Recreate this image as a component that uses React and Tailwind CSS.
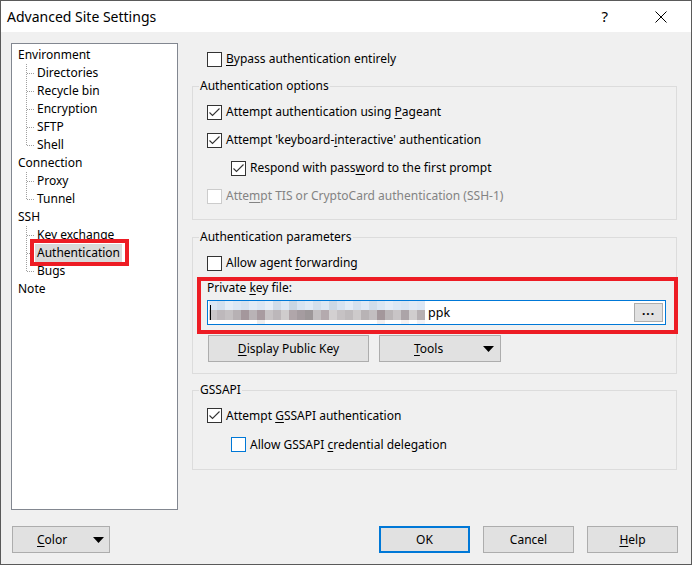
import React from "react";

const TREE = [
  { t: "Environment", kids: ["Directories", "Recycle bin", "Encryption", "SFTP", "Shell"] },
  { t: "Connection", kids: ["Proxy", "Tunnel"] },
  { t: "SSH", kids: ["Key exchange", "Authentication", "Bugs"] },
  { t: "Note", kids: [] },
];

// pixelated (blurred) file path
const TOP_ROW = [
  "bg-[#dbe7f4]", "bg-[#d3e0ee]", "bg-[#e4edf7]", "bg-[#dbe7f4]", "bg-[#d6e2ef]", "bg-[#e2ebf6]",
  "bg-[#dbe6f3]", "bg-[#e6eef7]", "bg-[#d0dce9]", "bg-[#dde8f4]", "bg-[#c9d6e3]", "bg-[#d8e4f1]",
  "bg-[#e0eaf5]", "bg-[#d3dfec]", "bg-[#dce7f3]", "bg-[#cbd8e5]", "bg-[#d7e3f0]", "bg-[#e3ecf6]",
  "bg-[#d5e1ee]", "bg-[#dfe9f5]", "bg-[#d1ddea]", "bg-[#dbe6f2]", "bg-[#e5edf7]", "bg-[#dde8f4]",
  "bg-[#d9e5f2]", "bg-[#e1eaf5]", "bg-[#dce7f4]",
];
const MID_ROW = [
  "bg-[#c9c6c8]", "bg-[#bdb8bb]", "bg-[#c4c0c2]", "bg-[#b7b1b4]", "bg-[#a4979c]", "bg-[#b9b3b6]",
  "bg-[#a89ba0]", "bg-[#c7c3c5]", "bg-[#bcb7ba]", "bg-[#cfcccd]", "bg-[#b0a6aa]", "bg-[#a59ca0]",
  "bg-[#9d9799]", "bg-[#c3bfc1]", "bg-[#b4aaae]", "bg-[#d3d0d1]", "bg-[#c6c2c4]", "bg-[#bfbbbd]",
  "bg-[#cdcacb]", "bg-[#b8b3b5]", "bg-[#c2bec0]", "bg-[#a3979b]", "bg-[#bab5b7]", "bg-[#c8c4c6]",
  "bg-[#aca4a8]", "bg-[#d0cdce]", "bg-[#b6b0b3]",
];
const LOW_ROW = [
  "bg-white", "bg-white", "bg-white", "bg-white", "bg-white", "bg-white", "bg-[#ededed]",
  "bg-white", "bg-white", "bg-white", "bg-white", "bg-white", "bg-white", "bg-white",
  "bg-white", "bg-white", "bg-white", "bg-white", "bg-white", "bg-white", "bg-white",
  "bg-[#f2efef]", "bg-white", "bg-white", "bg-[#f5f2f2]", "bg-white", "bg-[#f2f2f6]",
];

const Box = ({ checked, disabled, focus }) => (
  <span
    className={`flex h-[15px] w-[15px] shrink-0 items-center justify-center border bg-white ${
      disabled ? "border-[#cccccc]" : focus ? "border-[#0078d7]" : "border-[#333333]"
    }`}
  >
    {checked && (
      <svg width="13" height="13" viewBox="0 0 13 13">
        <path d="M1.5 6.5 L4.5 9.5 L11.5 2.5" fill="none" stroke="#333" strokeWidth="1.1" />
      </svg>
    )}
  </span>
);

const Check = ({ children, checked, disabled, focus, className = "pl-[14px]", h = "h-[28px]" }) => (
  <div className={`flex items-center gap-[4px] ${h} ${className}`}>
    <Box checked={checked} disabled={disabled} focus={focus} />
    <span className={disabled ? "text-[#838383]" : "text-black"}>{children}</span>
  </div>
);

const U = ({ children }) => <span className="underline underline-offset-[2px]">{children}</span>;

const Group = ({ title, className = "", children }) => (
  <fieldset className={`border border-[#dcdcdc] ${className}`}>
    <legend className="ml-[6px] px-[1px] leading-[16px]">{title}</legend>
    {children}
  </fieldset>
);

const Btn = ({ children, className = "", def, split }) => (
  <button
    className={`flex h-[27px] items-center bg-[#e1e1e1] ${split ? "justify-between" : "justify-center"} ${
      def ? "border-2 border-[#0078d7]" : "border border-[#adadad]"
    } ${className}`}
  >
    {children}
  </button>
);

const Tri = () => (
  <svg width="11" height="6" viewBox="0 0 11 6">
    <polygon points="0,0 11,0 5.5,6" fill="#000" />
  </svg>
);

const Connector = ({ last }) => (
  <svg width="9" height="18" viewBox="0 0 9 18" className="shrink-0">
    <line x1="0.5" y1="0" x2="0.5" y2={last ? 9.5 : 18} stroke="#a0a0a0" strokeDasharray="1 1" />
    <line x1="1" y1="9.5" x2="9" y2="9.5" stroke="#a0a0a0" strokeDasharray="1 1" />
  </svg>
);

export default function App() {
  return (
    <div className="flex h-[565px] w-[692px] flex-col border border-[#5a5a5a] bg-[#f0f0f0] font-['Noto_Sans',sans-serif] text-[12px] text-black">
      {/* title bar */}
      <div className="flex h-[31px] shrink-0 items-center bg-white pl-[6px]">
        <span className="text-[14px]">Advanced Site Settings</span>
        <span className="ml-auto text-[15px]">?</span>
        <svg width="12" height="12" viewBox="0 0 12 12" className="ml-[47px] mr-[24px]">
          <path d="M0.5 0.5 L11.5 11.5 M11.5 0.5 L0.5 11.5" stroke="#000" strokeWidth="1" />
        </svg>
      </div>

      <div className="flex pl-[10px] pt-[11px]">
        {/* tree */}
        <div className="h-[467px] w-[167px] shrink-0 border border-[#828790] bg-white pt-[2px]">
          {TREE.map((g) => (
            <div key={g.t}>
              <div className="flex h-[18px] items-center pl-[6px]">{g.t}</div>
              {g.kids.map((k, i) => (
                <div key={k} className="flex h-[18px] items-center pl-[14px]">
                  <Connector last={i === g.kids.length - 1} />
                  {k === "Authentication" ? (
                    <span className="relative flex h-[18px] items-center bg-[#d9d9d9] px-[2px]">
                      {k}
                      <span className="absolute -bottom-[4px] -left-[5px] -right-[7px] -top-[5px] border-4 border-[#ed1c24]" />
                    </span>
                  ) : (
                    <span className="px-[2px]">{k}</span>
                  )}
                </div>
              ))}
            </div>
          ))}
        </div>

        {/* right panel */}
        <div className="ml-[14px] w-[485px] pt-[2px]">
          <Check className="pl-[15px]">
            <U>B</U>ypass authentication entirely
          </Check>

          <Group title="Authentication options" className="mt-[5px] pb-[9px] pt-[4px]">
            <Check checked>
              Attempt authentication using <U>P</U>ageant
            </Check>
            <Check checked>
              Attempt 'keyboard-<U>i</U>nteractive' authentication
            </Check>
            <Check checked className="pl-[38px]">
              Respond with pass<U>w</U>ord to the first prompt
            </Check>
            <Check disabled>
              Atte<U>m</U>pt TIS or CryptoCard authentication (SSH-1)
            </Check>
          </Group>

          <Group title="Authentication parameters" className="mt-[9px] pb-[11px] pt-[4px]">
            <Check>
              Allow agent <U>f</U>orwarding
            </Check>
            <div className="relative ml-[14px] mr-[10px] mt-[3px]">
              <div className="leading-[16px]">
                Private <U>k</U>ey file:
              </div>
              <div className="mt-[4px] flex h-[25px] items-center border border-[#0078d7] bg-white pr-[2px]">
                <div className="relative ml-[1px] flex h-full flex-col">
                  <div className="flex h-[9px]">
                    {TOP_ROW.map((c, i) => (
                      <span key={i} className={`h-full w-[8px] ${c}`} />
                    ))}
                  </div>
                  <div className="flex h-[10px]">
                    {MID_ROW.map((c, i) => (
                      <span key={i} className={`h-full w-[8px] ${c}`} />
                    ))}
                  </div>
                  <div className="flex h-[4px]">
                    {LOW_ROW.map((c, i) => (
                      <span key={i} className={`h-full w-[8px] ${c}`} />
                    ))}
                  </div>
                  <span className="absolute left-[1px] top-[4px] h-[15px] w-[1px] bg-black" />
                </div>
                <span className="ml-[3px] text-[12.5px] leading-[16px]">ppk</span>
                <button className="ml-auto flex h-[19px] w-[29px] items-center justify-center border border-[#adadad] bg-[#e1e1e1] pb-[4px] text-[12px] font-bold tracking-[1px]">
                  ...
                </button>
              </div>
              <span className="pointer-events-none absolute -bottom-[9px] -left-[10px] -right-[12px] -top-[3px] border-4 border-[#ed1c24]" />
            </div>
            <div className="ml-[15px] mt-[10px] flex gap-[10px]">
              <Btn className="w-[161px]">
                <U>D</U>isplay Public Key
              </Btn>
              <Btn split className="w-[122px] pl-[34px] pr-[6px]">
                <span>
                  <U>T</U>ools
                </span>
                <Tri />
              </Btn>
            </div>
          </Group>

          <Group title="GSSAPI" className="mt-[8px] pb-[10px] pt-[3px]">
            <Check checked h="h-[29px]">
              Attempt <U>G</U>SSAPI authentication
            </Check>
            <Check focus h="h-[29px]" className="pl-[38px]">
              Allow GSSAPI <U>c</U>redential delegation
            </Check>
          </Group>
        </div>
      </div>

      {/* bottom buttons */}
      <div className="mt-[16px] flex pl-[11px] pr-[13px]">
        <Btn split className="w-[98px] pl-[24px] pr-[5px]">
          <span>
            <U>C</U>olor
          </span>
          <Tri />
        </Btn>
        <div className="ml-auto flex gap-[13px]">
          <Btn def className="w-[91px]">
            OK
          </Btn>
          <Btn className="w-[91px]">Cancel</Btn>
          <Btn className="w-[91px]">
            <U>H</U>elp
          </Btn>
        </div>
      </div>
    </div>
  );
}
